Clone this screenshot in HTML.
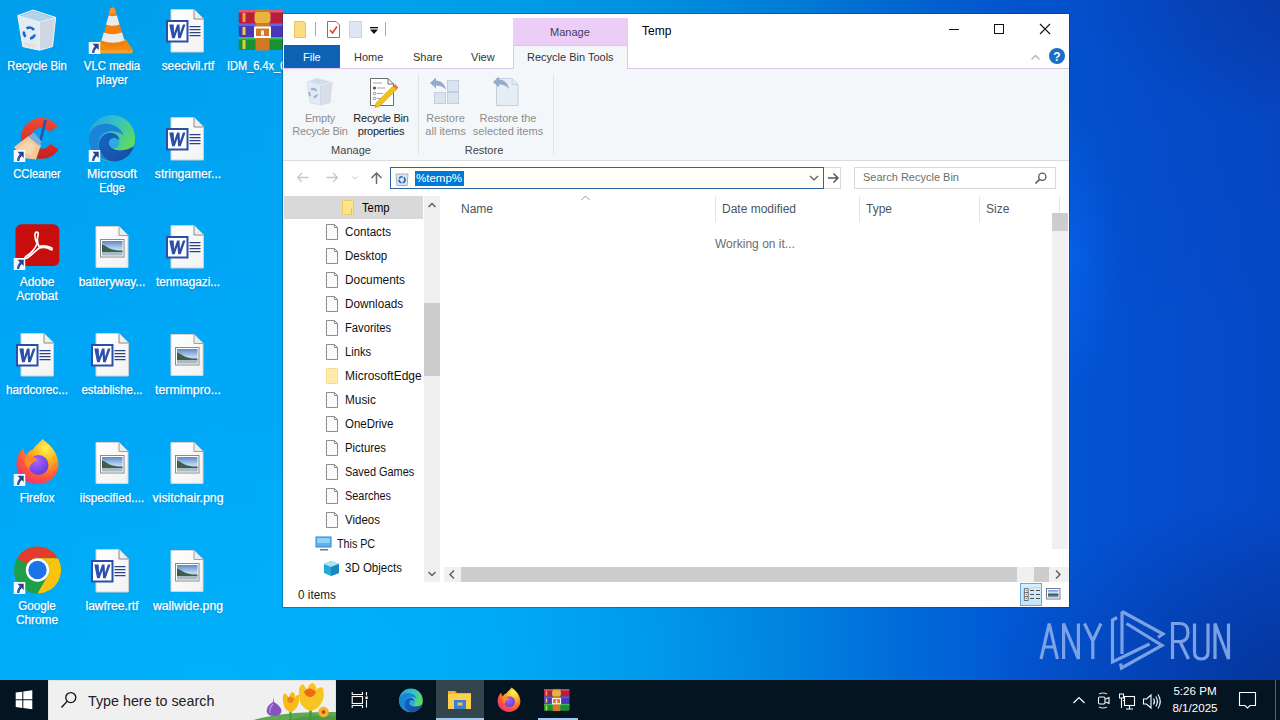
<!DOCTYPE html>
<html><head><meta charset="utf-8">
<style>
*{margin:0;padding:0;box-sizing:border-box}
html,body{width:1280px;height:720px;overflow:hidden}
body{font-family:"Liberation Sans",sans-serif;position:relative;background:#0a7fe0}
.abs{position:absolute;white-space:nowrap}
#bg{position:absolute;left:0;top:0;width:1280px;height:680px;background:radial-gradient(ellipse 50px 140px at 1069px 255px,rgba(10,110,255,.45),rgba(10,110,255,0)),radial-gradient(ellipse 300px 180px at 1280px 680px,rgba(0,10,60,.3),rgba(0,10,60,0)),radial-gradient(ellipse 200px 120px at 1280px 0px,rgba(20,0,60,.15),rgba(20,0,60,0)),linear-gradient(90deg,#00a6f6 0%,#00aaf8 28%,#00a4f2 40%,#0098ea 50%,#0082e0 62%,#006ad8 71%,#0358d6 79%,#044fd0 89%,#0648c6 100%)}
#bg2{position:absolute;left:0;top:0;width:1280px;height:680px;background:radial-gradient(ellipse 600px 260px at 200px 680px,rgba(0,200,255,.28),rgba(0,200,255,0)),linear-gradient(180deg,rgba(0,0,40,0.05) 0%,rgba(0,0,0,0) 50%)}
.lab{position:absolute;width:100px;text-align:center;color:#fff;font-size:12px;line-height:15px;white-space:nowrap;text-shadow:0 1px 2px rgba(0,20,60,.3);-webkit-text-stroke:0.25px #fff}
#win{position:absolute;left:283px;top:14px;width:786px;height:593px;background:#fff;overflow:hidden}
.t11{font-size:11px}
.t12{font-size:12px}
#taskbar{position:absolute;left:0;top:680px;width:1280px;height:40px;background:#041420}
</style></head>
<body>
<div id="bg"></div><div id="bg2"></div>

<svg width="0" height="0" style="position:absolute">
<defs>
 <linearGradient id="gSky" x1="0" y1="0" x2="0" y2="1"><stop offset="0" stop-color="#5d86cc"/><stop offset=".5" stop-color="#b6d2ee"/><stop offset="1" stop-color="#dfe8ee"/></linearGradient>
 <linearGradient id="gPage" x1="0" y1="0" x2="1" y2="1"><stop offset="0" stop-color="#ffffff"/><stop offset="1" stop-color="#f2f2f2"/></linearGradient>
 <symbol id="sc" viewBox="0 0 12 12">
  <rect x="0" y="0" width="12" height="12" fill="#f4fbff"/>
  <path d="M4 1.8 H10.2 V8 L8.2 6 C6.6 7.6 5.8 9.2 5.8 11 H3.6 C3.5 8.4 4.5 6.2 6.3 4.2 Z" fill="#2a4088"/>
  <path d="M4.6 10.6 C4.4 8.6 5.2 6.6 6.8 5" fill="none" stroke="#4a7ac8" stroke-width=".7"/>
 </symbol>
 <symbol id="word" viewBox="0 0 48 48">
  <path d="M7.5 3.5 H30.5 L40 13 V46 H7.5 Z" fill="url(#gPage)" stroke="#cfcfcf" stroke-width="1"/>
  <path d="M30.5 3.5 V13 H40" fill="#eeeeee" stroke="#8a8a8a" stroke-width="1"/>
  <rect x="3.5" y="15" width="20.5" height="20.5" fill="#fff" stroke="#2b4fa8" stroke-width="2"/>
  <path d="M5.8 18.5 H10.2 L10.6 27 L13.6 18.5 H16 L16.5 27 L19.4 18.5 H22 L17.2 32.2 H14.6 L14 24.2 L11.2 32.2 H8.6 Z" fill="#2b4fa8"/>
  <g stroke="#2c4488" stroke-width="1.1"><path d="M26 20.6 H37 M26 23.6 H37 M26 26.6 H37 M26 29.6 H37"/></g>
 </symbol>
 <symbol id="img" viewBox="0 0 48 48">
  <path d="M7.5 4.5 H30.5 L39.5 13.5 V45.5 H7.5 Z" fill="url(#gPage)" stroke="#d4d4d4" stroke-width="1"/>
  <path d="M30.5 4.5 V13.5 H39.5" fill="#ececec" stroke="#a0a0a0" stroke-width="1"/>
  <rect x="12" y="17.5" width="23.5" height="17.5" fill="#fff" stroke="#8a8a8a" stroke-width="1"/>
  <rect x="13.5" y="19" width="20.5" height="14.5" fill="url(#gSky)"/>
  <path d="M13.5 22.5 C17 23.5 20 26.5 24 27.5 C27 28.5 31 28.5 34 28.5 V30.5 H13.5Z" fill="#3e5e48"/>
  <path d="M13.5 30 H34 V33.5 H13.5Z" fill="#a8bac4"/>
 </symbol>
 <symbol id="recycle" viewBox="0 0 48 48">
  <path d="M4.3 9.6 L26 15.7 L26 44.2 L9.3 40.6Z" fill="#e4ecf3"/>
  <path d="M26 15.7 L42.2 11.4 L39 40.6 L26 44.2Z" fill="#cfd8e2"/>
  <path d="M4.3 9.6 L19.5 4.1 L42.2 11.4 L26 15.7Z" fill="#9cc4e6"/>
  <path d="M7.5 9.8 L19.5 5.8 L38.5 11.6 L26 14.6Z" fill="#b4d2ec"/>
  <path d="M4.3 9.6 L19.5 4.1 L42.2 11.4 L26 15.7Z M4.3 9.6 L9.3 40.6 L26 44.2 L39 40.6 L42.2 11.4" fill="none" stroke="#eef5fb" stroke-width="1"/>
  <path d="M26 15.7 V44.2" stroke="#f4f8fb" stroke-width=".8"/>
  <g fill="none" stroke="#1f66cc" stroke-width="2.6">
   <path d="M13 22.5 A5.6 5.6 0 0 1 20.5 24"/>
   <path d="M21.3 28.5 A5.6 5.6 0 0 1 16.5 32.5"/>
   <path d="M12.2 30.8 A5.6 5.6 0 0 1 10.5 25.5"/>
  </g>
  <path d="M10 36 L22 38 L22 42 L11 39.5Z" fill="#f2d6c0" opacity=".6"/>
 </symbol>
 <symbol id="vlc" viewBox="0 0 48 48">
  <path d="M13 33 L37 33 L44.5 44 L43.5 47 L9 47 L8 44Z" fill="#f28a10"/>
  <path d="M9 44 L44 44 L43.5 47.5 L9 47.5Z" fill="#f7a030"/>
  <path d="M22 2 Q24 .8 26 2 L37 38 Q24 43 13 38Z" fill="#f47e0c"/>
  <path d="M20.2 9.5 Q24 11 28.3 9.5 L31 18.5 Q24 21 17.5 18.5Z" fill="#e9ecee"/>
  <path d="M15.2 26.5 Q24 30 33.5 26.5 L36 34.5 Q24 39 13 34.5Z" fill="#e9ecee"/>
  <path d="M22 2 Q24 .8 26 2 L27.5 7 Q24 8.5 20.5 7Z" fill="#f7943a"/>
 </symbol>
 <symbol id="winrar" viewBox="0 0 48 48">
  <rect x="0" y="4" width="48" height="13.5" rx="2" fill="#b81e3a"/>
  <rect x="0" y="4" width="48" height="2.5" rx="1.2" fill="#e0587a"/>
  <rect x="0" y="17.5" width="48" height="13.5" rx="2" fill="#4838b8"/>
  <rect x="0" y="17.5" width="48" height="2.5" fill="#6e62d8"/>
  <rect x="0" y="31" width="48" height="13" rx="2" fill="#1a9034"/>
  <rect x="0" y="31" width="48" height="2.5" fill="#40b860"/>
  <rect x="4" y="7" width="3" height="9" fill="#e8a040"/>
  <rect x="4" y="21" width="3" height="8" fill="#e8d040"/>
  <rect x="4" y="34" width="3" height="9" fill="#d8d038"/>
  <rect x="17" y="3.5" width="14" height="41" fill="#d07a26"/>
  <rect x="16" y="6" width="16" height="11" rx="3" fill="#e8b440"/>
  <rect x="16.5" y="21.5" width="15" height="9.5" fill="none" stroke="#fff" stroke-width="2"/>
  <rect x="22.5" y="24.5" width="3" height="5" fill="#f0f0f0"/>
 </symbol>
 <symbol id="ccleaner" viewBox="0 0 48 48">
  <defs><linearGradient id="ccg" x1="0" y1="0" x2="0" y2="1"><stop offset="0" stop-color="#f04a38"/><stop offset="1" stop-color="#c81e1e"/></linearGradient></defs>
  <path d="M44.4 12.3 A20.5 20.5 0 1 0 45.2 35.2 L36.7 29.9 A10.5 10.5 0 1 1 36.3 18.1Z" fill="url(#ccg)"/>
  <path d="M30.8 5.5 L33.3 6.5 L27.5 30 L25 29Z" fill="#2456a8"/>
  <path d="M0.5 33 L15 22 L27.5 31 L22.5 45.5 L9 44Z" fill="#f2c898"/>
  <path d="M4 35 L15 26 L22 32 L18 42Z" fill="#f8dcb8" opacity=".7"/>
  <path d="M14.5 22.5 L20.5 18.5 L28.5 28 L25.5 31.5Z" fill="#7aaee0"/>
 </symbol>
 <symbol id="edge" viewBox="0 0 48 48">
  <defs>
   <linearGradient id="eg1" x1="0" y1="0" x2="1" y2=".7"><stop offset="0" stop-color="#2a9ee2"/><stop offset=".45" stop-color="#34c0c8"/><stop offset="1" stop-color="#66e04a"/></linearGradient>
   <linearGradient id="eg2" x1="0" y1="0" x2="1" y2="1"><stop offset="0" stop-color="#1466c8"/><stop offset="1" stop-color="#1a4a9c"/></linearGradient>
  </defs>
  <circle cx="23.3" cy="24.3" r="23.3" fill="url(#eg1)"/>
  <path d="M0.2 24 C1 14 10 9 20 10 C27 11 33 15 35 21 C30 17 22 16 16 19 C9 23 8 33 13 40 C17 45 23 47.5 28 47.4 C12 48 0 38 0.2 24Z" fill="#1a84d8"/>
  <path d="M13 40 C8 33 10 23 17 20 C23 17 30 20 31 26 C29 25 26 24 24 25.5 C20 28 21 33 25 35 C31 38 40 36 45.5 32 C43 41 35 47 26 47.5 C20 47.5 16 44 13 40Z" fill="url(#eg2)"/>
  <circle cx="25.5" cy="29" r="5.2" fill="#2fa8e6"/>
 </symbol>
 <symbol id="acrobat" viewBox="0 0 48 48">
  <rect x="2" y="2.3" width="43.8" height="41.7" rx="6" fill="#c80d0d"/>
  <path d="M23.3 10.2 C20.6 10.2 20.8 16 23.6 21.8 C21.6 26.8 17 31.8 12.2 34.6 C10.8 35.6 11.8 37 13.6 36 C18 33.2 22 29.2 25.6 26 C30 25 34 25.2 37.2 27.6 C38.8 28.8 39.2 26.2 37.4 25.6 C33.2 23.6 28.4 23.8 25.4 24.4 C23.8 21 23.4 17 24.6 12.6 C25 11 24.4 10.2 23.3 10.2Z" fill="none" stroke="#fff" stroke-width="1.7" stroke-linejoin="round"/>
 </symbol>
 <symbol id="firefox" viewBox="0 0 48 48">
  <defs>
   <radialGradient id="ff1" cx=".7" cy=".2" r=".9"><stop offset="0" stop-color="#fff44f"/><stop offset=".35" stop-color="#ffb020"/><stop offset=".7" stop-color="#ff5a36"/><stop offset="1" stop-color="#f02c7a"/></radialGradient>
   <radialGradient id="ff2" cx=".4" cy=".3" r=".8"><stop offset="0" stop-color="#b060ff"/><stop offset="1" stop-color="#5a3ad8"/></radialGradient>
  </defs>
  <path d="M29 1 C34 5 44 12 45 26 C45 38 36 46 24 46 C12 46 3 38 3 26 C3 19 6 13 10 10 C10 14 11 16 13 17 C14 14 17 12 19 12 C21 8 26 5 29 1Z" fill="url(#ff1)"/>
  <circle cx="25" cy="27" r="10" fill="url(#ff2)"/>
  <path d="M12 20 C16 17 24 20 24 22 C20 24 16 26 16 31 C12 28 11 24 12 20Z" fill="#ff8a2a"/>
 </symbol>
 <symbol id="chrome" viewBox="0 0 48 48">
  <circle cx="24" cy="24" r="23.5" fill="#1fa048"/>
  <path d="M24 .5 A23.5 23.5 0 0 1 44.4 12.3 L24 12.3 A11.7 11.7 0 0 0 13.9 18.2 L3.7 12.3 A23.5 23.5 0 0 1 24 .5Z" fill="#e33b2e"/>
  <path d="M44.4 12.3 A23.5 23.5 0 0 1 24 47.5 L34.1 29.9 A11.7 11.7 0 0 0 34.1 18.2 Z" fill="#fcc30c"/>
  <path d="M44.4 12.3 L24 12.3 A11.7 11.7 0 0 1 34.1 18.2Z" fill="#fcc30c"/>
  <circle cx="24" cy="24" r="11.7" fill="#fff"/>
  <circle cx="24" cy="24" r="9.2" fill="#1a73e8"/>
 </symbol>
</defs>
</svg>

<svg class="abs" style="left:0;top:0" width="283" height="680">
<use href="#recycle" x="13.5" y="6" width="48" height="48"/>
<use href="#vlc" x="88.5" y="6" width="48" height="48"/>
<use href="#sc" x="88.5" y="42" width="12" height="12"/>
<use href="#word" x="163.5" y="6" width="48" height="48"/>
<use href="#winrar" x="238.5" y="6" width="48" height="48"/>
<use href="#ccleaner" x="13.5" y="114" width="48" height="48"/>
<use href="#sc" x="13.5" y="150" width="12" height="12"/>
<use href="#edge" x="88.5" y="114" width="48" height="48"/>
<use href="#sc" x="88.5" y="150" width="12" height="12"/>
<use href="#word" x="163.5" y="114" width="48" height="48"/>
<use href="#acrobat" x="13.5" y="222" width="48" height="48"/>
<use href="#sc" x="13.5" y="258" width="12" height="12"/>
<use href="#img" x="88.5" y="222" width="48" height="48"/>
<use href="#word" x="163.5" y="222" width="48" height="48"/>
<use href="#word" x="13.5" y="330" width="48" height="48"/>
<use href="#word" x="88.5" y="330" width="48" height="48"/>
<use href="#img" x="163.5" y="330" width="48" height="48"/>
<use href="#firefox" x="13.5" y="438" width="48" height="48"/>
<use href="#sc" x="13.5" y="474" width="12" height="12"/>
<use href="#img" x="88.5" y="438" width="48" height="48"/>
<use href="#img" x="163.5" y="438" width="48" height="48"/>
<use href="#chrome" x="13.5" y="546" width="48" height="48"/>
<use href="#sc" x="13.5" y="582" width="12" height="12"/>
<use href="#word" x="88.5" y="546" width="48" height="48"/>
<use href="#img" x="163.5" y="546" width="48" height="48"/>
</svg>
<div class="lab" style="left:-13px;width:100px;top:58.5px;transform:scaleX(0.939)">Recycle Bin</div>
<div class="lab" style="left:61.8px;width:100px;top:58.5px;transform:scaleX(0.948)">VLC media</div>
<div class="lab" style="left:61.8px;width:100px;top:73.1px;transform:scaleX(0.976)">player</div>
<div class="lab" style="left:137.5px;width:100px;top:58.5px;transform:scaleX(0.986)">seecivil.rtf</div>
<div class="lab" style="left:227.4px;top:58.5px;width:auto;text-align:left;transform:scaleX(0.915);transform-origin:0 0">IDM_6.4x_C</div>
<div class="lab" style="left:-13px;width:100px;top:166.5px;transform:scaleX(0.937)">CCleaner</div>
<div class="lab" style="left:61.8px;width:100px;top:166.5px;transform:scaleX(1.025)">Microsoft</div>
<div class="lab" style="left:61.8px;width:100px;top:181.1px;transform:scaleX(0.917)">Edge</div>
<div class="lab" style="left:137.5px;width:100px;top:166.5px;transform:scaleX(1.004)">stringamer...</div>
<div class="lab" style="left:-13px;width:100px;top:274.5px;transform:scaleX(1.000)">Adobe</div>
<div class="lab" style="left:-13px;width:100px;top:289.1px;transform:scaleX(1.009)">Acrobat</div>
<div class="lab" style="left:61.8px;width:100px;top:274.5px;transform:scaleX(0.992)">batteryway...</div>
<div class="lab" style="left:137.5px;width:100px;top:274.5px;transform:scaleX(0.982)">tenmagazi...</div>
<div class="lab" style="left:-13px;width:100px;top:382.5px;transform:scaleX(0.977)">hardcorec...</div>
<div class="lab" style="left:61.8px;width:100px;top:382.5px;transform:scaleX(0.953)">establishe...</div>
<div class="lab" style="left:137.5px;width:100px;top:382.5px;transform:scaleX(1.031)">termimpro...</div>
<div class="lab" style="left:-13px;width:100px;top:490.5px;transform:scaleX(0.946)">Firefox</div>
<div class="lab" style="left:61.8px;width:100px;top:490.5px;transform:scaleX(0.976)">iispecified....</div>
<div class="lab" style="left:137.5px;width:100px;top:490.5px;transform:scaleX(1.023)">visitchair.png</div>
<div class="lab" style="left:-13px;width:100px;top:598.5px;transform:scaleX(0.969)">Google</div>
<div class="lab" style="left:-13px;width:100px;top:613.1px;transform:scaleX(0.989)">Chrome</div>
<div class="lab" style="left:61.8px;width:100px;top:598.5px;transform:scaleX(1.008)">lawfree.rtf</div>
<div class="lab" style="left:137.5px;width:100px;top:598.5px;transform:scaleX(1.019)">wallwide.png</div>
<!-- Explorer window -->
<div class="abs" style="left:282px;top:13px;width:788px;height:595px;border:1px solid rgba(10,40,100,.35)"></div>
<div id="win">
  <svg width="0" height="0" style="position:absolute"><defs>
   <symbol id="pg" viewBox="0 0 12 16"><path d="M.5 .5 H8.5 L11.5 3.5 V15.5 H.5Z" fill="#fbfbfb" stroke="#8c8c8c" stroke-width="1"/><path d="M8.5 .5 V3.5 H11.5" fill="none" stroke="#8c8c8c" stroke-width="1"/></symbol>
  </defs></svg>
  <!-- title bar -->
  <svg class="abs" style="left:0;top:0" width="120" height="31">
   <path d="M11.5 7.5 H21 L22.5 9 V23.5 H11.5Z" fill="#fcdc7c" stroke="#e6c260" stroke-width="1"/>
   <rect x="32" y="8" width="1" height="14" fill="#a8a8a8"/>
   <path d="M44.5 7.5 H53 L56.5 11 V23.5 H44.5Z" fill="#fff" stroke="#777" stroke-width="1"/>
   <path d="M47 16 L49.5 19 L54 12.5" fill="none" stroke="#e0442a" stroke-width="1.6"/>
   <path d="M66.5 7.5 H78.5 V23.5 H66.5Z" fill="#dde6f2" stroke="#c8d2e0" stroke-width="1"/>
   <rect x="87" y="13" width="8" height="1.3" fill="#111"/>
   <path d="M87 15.5 H95 L91 20Z" fill="#111"/>
   <rect x="102" y="8" width="1" height="14" fill="#a8a8a8"/>
  </svg>
  <div class="abs" style="left:230px;top:4px;width:115px;height:27px;background:#ebcdf7"></div>
  <div class="abs t11" style="left:267px;top:12px;color:#463a5c">Manage</div>
  <div class="abs t12" style="left:359px;top:10px;color:#000">Temp</div>
  <svg class="abs" style="left:660px;top:4px" width="120" height="24">
   <rect x="6" y="11" width="10" height="1" fill="#111"/>
   <rect x="51.5" y="6.5" width="9" height="9" fill="none" stroke="#111" stroke-width="1"/>
   <path d="M97 6 L107 16 M107 6 L97 16" stroke="#111" stroke-width="1.1"/>
  </svg>
  <!-- ribbon tabs -->
  <div class="abs" style="left:1px;top:31px;width:56px;height:23px;background:#0e62b4"></div>
  <div class="abs t11" style="left:20px;top:37px;color:#fff">File</div>
  <div class="abs t11" style="left:71px;top:37px;color:#333">Home</div>
  <div class="abs t11" style="left:130px;top:37px;color:#333">Share</div>
  <div class="abs t11" style="left:188px;top:37px;color:#333">View</div>
  <div class="abs" style="left:0;top:54px;width:786px;height:1px;background:#dcc7ea"></div>
  <div class="abs" style="left:230px;top:31px;width:115px;height:24px;background:#f4f7fa;border:1px solid #dcc7ea;border-bottom:none"></div>
  <div class="abs t11" style="left:244px;top:37px;color:#333">Recycle Bin Tools</div>
  <svg class="abs" style="left:740px;top:32px" width="46" height="22">
   <path d="M8.5 13.5 L12.5 9.5 L16.5 13.5" fill="none" stroke="#b4b4b4" stroke-width="1.3"/>
   <circle cx="34" cy="10" r="8" fill="#1a6ec6"/>
   <text x="34" y="14.5" text-anchor="middle" font-family="Liberation Sans" font-weight="bold" font-size="12" fill="#fff">?</text>
  </svg>
  <!-- ribbon body -->
  <div class="abs" style="left:0;top:55px;width:786px;height:92px;background:#f4f7fa;border-bottom:1px solid #dadbdc"></div>
  <div class="abs" style="left:135px;top:60px;width:1px;height:80px;background:#e2e3e4"></div>
  <div class="abs" style="left:270px;top:60px;width:1px;height:80px;background:#e2e3e4"></div>
  <svg class="abs" style="left:0;top:55px" width="300" height="60">
   <!-- empty recycle bin -->
   <g opacity=".6">
    <path d="M23.8 12.5 L37.5 16.5 L37.5 36 L27 33.8Z" fill="#dbe3ec" stroke="#b0c0d0" stroke-width=".6"/>
    <path d="M37.5 16.5 L49.2 12.8 L47 33.8 L37.5 36Z" fill="#c4cfdb" stroke="#b0c0d0" stroke-width=".6"/>
    <path d="M23.8 12.5 L34 8.8 L49.2 12.8 L37.5 16.5Z" fill="#b6cde2" stroke="#e8f0f6" stroke-width=".8"/>
    <g fill="none" stroke="#5a86b8" stroke-width="2"><path d="M28 20.5 A4.2 4.2 0 0 1 33.5 22"/><path d="M34 25.5 A4.2 4.2 0 0 1 30.5 28.5"/><path d="M27.3 27 A4.2 4.2 0 0 1 26.5 23"/></g>
   </g>
   <!-- properties -->
   <path d="M87.5 9.5 H105 L110.5 15 V36.5 H87.5Z" fill="#fff" stroke="#6b6b6b" stroke-width="1"/>
   <path d="M105 9.5 V15 H110.5" fill="none" stroke="#6b6b6b" stroke-width="1"/>
   <circle cx="91.5" cy="19" r="1.6" fill="#555"/><circle cx="91.5" cy="24.5" r="1.3" fill="none" stroke="#5a7eb0" stroke-width=".8"/><circle cx="91.5" cy="29.5" r="1.3" fill="none" stroke="#5a7eb0" stroke-width=".8"/>
   <path d="M94 19 H102 M90 14 H99 M94 24.5 H100 M94 29.5 H99" stroke="#8a8a8a" stroke-width=".8"/>
   <path d="M93 34 L110 17 L113.5 20.5 L96.5 37.5 L92 38.5Z" fill="#f2c21c" stroke="#c89a10" stroke-width=".6"/>
   <path d="M110 17 L112 15 L115.5 18.5 L113.5 20.5Z" fill="#e8744a"/>
   <!-- restore all -->
   <g opacity=".55">
    <rect x="164.5" y="11.5" width="11" height="11" fill="#c8d6e6" stroke="#9cb0c8"/>
    <rect x="151.5" y="23.5" width="11" height="11" fill="#c8d6e6" stroke="#9cb0c8"/>
    <rect x="164.5" y="23.5" width="11" height="11" fill="#c8d6e6" stroke="#9cb0c8"/>
    <path d="M147 14 L153 8.5 L153 11.5 C158 11.5 162 15 163 21 C160 17.5 157 16.5 153 16.5 L153 19.5Z" fill="#4a6ea8"/>
   </g>
   <!-- restore selected -->
   <g opacity=".55">
    <path d="M213.5 9.5 H229 L235 15.5 V36.5 H213.5Z" fill="#dbe6f2" stroke="#9cb0c8"/>
    <path d="M229 9.5 V15.5 H235" fill="none" stroke="#9cb0c8"/>
    <path d="M210 13 L216 7.5 L216 10.5 C221 10.5 225 14 226 20 C223 16.5 220 15.5 216 15.5 L216 18.5Z" fill="#4a6ea8"/>
   </g>
  </svg>
  <div class="abs t11" style="left:7px;top:98px;color:#8d8d8d;width:60px;text-align:center;line-height:12.5px;letter-spacing:-.25px">Empty<br>Recycle Bin</div>
  <div class="abs t11" style="left:67px;top:98px;color:#222;width:62px;text-align:center;line-height:12.5px;letter-spacing:-.25px">Recycle Bin<br>properties</div>
  <div class="abs t11" style="left:132px;top:98px;color:#8d8d8d;width:61px;text-align:center;line-height:12.5px">Restore<br>all items</div>
  <div class="abs t11" style="left:185px;top:98px;color:#8d8d8d;width:80px;text-align:center;line-height:12.5px">Restore the<br>selected items</div>
  <div class="abs t11" style="left:38px;top:130px;color:#444;width:60px;text-align:center">Manage</div>
  <div class="abs t11" style="left:171px;top:130px;color:#444;width:60px;text-align:center">Restore</div>
  <!-- address row -->
  <svg class="abs" style="left:0;top:150px" width="110" height="28">
   <path d="M14.5 13.5 H25.5 M14.5 13.5 L19 9 M14.5 13.5 L19 18" fill="none" stroke="#c6c6c6" stroke-width="1.3"/>
   <path d="M43.5 13.5 H54.5 M54.5 13.5 L50 9 M54.5 13.5 L50 18" fill="none" stroke="#c6c6c6" stroke-width="1.3"/>
   <path d="M69.5 12.5 L72 15 L74.5 12.5" fill="none" stroke="#c6c6c6" stroke-width="1"/>
   <path d="M93.5 20 V9 M88.5 14 L93.5 9 L98.5 14" fill="none" stroke="#6b6b6b" stroke-width="1.5"/>
  </svg>
  <div class="abs" style="left:107px;top:153px;width:434px;height:22px;border:1px solid #2a63a8;background:#fffff8"></div>
  <svg class="abs" style="left:112px;top:158px" width="14" height="14">
   <path d="M1 2 H13 L12 13.5 H2Z" fill="#dfe8f0" stroke="#8aa0b8" stroke-width=".8"/>
   <circle cx="7" cy="7.8" r="3" fill="none" stroke="#1e63c4" stroke-width="1.6" stroke-dasharray="4 1.2"/>
  </svg>
  <div class="abs" style="left:132px;top:157px;width:49px;height:15px;background:#0078d7"></div>
  <div class="abs" style="left:133px;top:158px;color:#fff;font-size:11.5px">%temp%</div>
  <svg class="abs" style="left:525px;top:158px" width="12" height="12"><path d="M2 4 L6 8 L10 4" fill="none" stroke="#555" stroke-width="1.1"/></svg>
  <div class="abs" style="left:541px;top:153px;width:17px;height:22px;border:1px solid #d9d9d9;border-left:none"></div>
  <svg class="abs" style="left:544px;top:158px" width="12" height="12"><path d="M1 6 H11 M6.5 1.5 L11 6 L6.5 10.5" fill="none" stroke="#555" stroke-width="1.5"/></svg>
  <div class="abs" style="left:571px;top:153px;width:202px;height:22px;border:1px solid #d9d9d9"></div>
  <div class="abs t11" style="left:580px;top:157px;color:#6d6d6d">Search Recycle Bin</div>
  <svg class="abs" style="left:751px;top:157px" width="14" height="14"><circle cx="8.3" cy="5.7" r="3.6" fill="none" stroke="#555" stroke-width="1.3"/><path d="M5.6 8.4 L1.5 12.5" stroke="#555" stroke-width="1.6"/></svg>
  <!-- nav pane -->
  <div class="abs" style="left:1px;top:182px;width:139px;height:23px;background:#d9d9d9"></div>
  <svg class="abs" style="left:58px;top:185px" width="14" height="17"><path d="M1.5 1.5 H12.5 V15.5 H1.5Z" fill="#fde48c" stroke="#eccb64" stroke-width="1"/><path d="M10.5 9 V15.5" stroke="#e6c05a" stroke-width="1"/></svg>
  <div class="abs" style="left:79px;top:187px;font-size:12px;color:#000;transform:scaleX(0.937);transform-origin:0 0">Temp</div>
  <svg class="abs" style="left:43px;top:210px" width="12" height="16"><use href="#pg" width="12" height="16"/></svg>
  <div class="abs" style="left:62px;top:211px;font-size:12px;color:#111;transform:scaleX(0.972);transform-origin:0 0">Contacts</div>
  <svg class="abs" style="left:43px;top:234px" width="12" height="16"><use href="#pg" width="12" height="16"/></svg>
  <div class="abs" style="left:62px;top:235px;font-size:12px;color:#111;transform:scaleX(0.959);transform-origin:0 0">Desktop</div>
  <svg class="abs" style="left:43px;top:258px" width="12" height="16"><use href="#pg" width="12" height="16"/></svg>
  <div class="abs" style="left:62px;top:259px;font-size:12px;color:#111;transform:scaleX(0.989);transform-origin:0 0">Documents</div>
  <svg class="abs" style="left:43px;top:282px" width="12" height="16"><use href="#pg" width="12" height="16"/></svg>
  <div class="abs" style="left:62px;top:283px;font-size:12px;color:#111;transform:scaleX(0.979);transform-origin:0 0">Downloads</div>
  <svg class="abs" style="left:43px;top:306px" width="12" height="16"><use href="#pg" width="12" height="16"/></svg>
  <div class="abs" style="left:62px;top:307px;font-size:12px;color:#111;transform:scaleX(0.936);transform-origin:0 0">Favorites</div>
  <svg class="abs" style="left:43px;top:330px" width="12" height="16"><use href="#pg" width="12" height="16"/></svg>
  <div class="abs" style="left:62px;top:331px;font-size:12px;color:#111;transform:scaleX(0.935);transform-origin:0 0">Links</div>
  <svg class="abs" style="left:43px;top:354px" width="13" height="16"><path d="M.5 .5 H11.5 V15.5 H.5Z" fill="#fdeaa8" stroke="#f4dc90"/></svg>
  <div class="abs" style="left:62px;top:355px;font-size:12px;color:#111;transform:scaleX(1.0);transform-origin:0 0">MicrosoftEdge</div>
  <svg class="abs" style="left:43px;top:378px" width="12" height="16"><use href="#pg" width="12" height="16"/></svg>
  <div class="abs" style="left:62px;top:379px;font-size:12px;color:#111;transform:scaleX(0.983);transform-origin:0 0">Music</div>
  <svg class="abs" style="left:43px;top:402px" width="12" height="16"><use href="#pg" width="12" height="16"/></svg>
  <div class="abs" style="left:62px;top:403px;font-size:12px;color:#111;transform:scaleX(0.955);transform-origin:0 0">OneDrive</div>
  <svg class="abs" style="left:43px;top:426px" width="12" height="16"><use href="#pg" width="12" height="16"/></svg>
  <div class="abs" style="left:62px;top:427px;font-size:12px;color:#111;transform:scaleX(0.946);transform-origin:0 0">Pictures</div>
  <svg class="abs" style="left:43px;top:450px" width="12" height="16"><use href="#pg" width="12" height="16"/></svg>
  <div class="abs" style="left:62px;top:451px;font-size:12px;color:#111;transform:scaleX(0.91);transform-origin:0 0">Saved Games</div>
  <svg class="abs" style="left:43px;top:474px" width="12" height="16"><use href="#pg" width="12" height="16"/></svg>
  <div class="abs" style="left:62px;top:475px;font-size:12px;color:#111;transform:scaleX(0.908);transform-origin:0 0">Searches</div>
  <svg class="abs" style="left:43px;top:498px" width="12" height="16"><use href="#pg" width="12" height="16"/></svg>
  <div class="abs" style="left:62px;top:499px;font-size:12px;color:#111;transform:scaleX(0.96);transform-origin:0 0">Videos</div>
  <svg class="abs" style="left:32px;top:522px" width="18" height="16"><rect x="1" y="1" width="15" height="10" fill="#5ab4ec" stroke="#2c8ad0"/><rect x="2" y="2" width="13" height="5" fill="#8fd0f8"/><rect x="5" y="13" width="8" height="1.5" fill="#777"/></svg>
  <div class="abs" style="left:54px;top:523px;font-size:12px;color:#111;transform:scaleX(0.893);transform-origin:0 0">This PC</div>
  <svg class="abs" style="left:40px;top:546px" width="18" height="17"><path d="M8 1 L16 4 V13 L8 16 L1 13 V4Z" fill="#24a8d8"/><path d="M1 4 L8 7 L16 4 L8 1Z" fill="#a8e4f4"/><path d="M8 7 V16 L16 13 V4Z" fill="#1a88c0"/></svg>
  <div class="abs" style="left:62px;top:547px;font-size:12px;color:#111;transform:scaleX(0.959);transform-origin:0 0">3D Objects</div>
  <div class="abs" style="left:141px;top:182px;width:16px;height:386px;background:#f0f0f0"></div>
  <div class="abs" style="left:141px;top:289px;width:16px;height:73px;background:#cdcdcd"></div>
  <svg class="abs" style="left:141px;top:182px" width="16" height="386">
   <path d="M4.5 11 L8 7.5 L11.5 11" fill="none" stroke="#606060" stroke-width="1.5"/>
   <path d="M4.5 376 L8 379.5 L11.5 376" fill="none" stroke="#606060" stroke-width="1.5"/>
  </svg>
  <!-- content -->
  <svg class="abs" style="left:160px;top:180px" width="640" height="50">
   <path d="M138.5 6 L142.5 2 L146.5 6" fill="none" stroke="#9a9a9a" stroke-width="1"/>
   <rect x="272" y="2" width="1" height="26" fill="#e5e5e5"/>
   <rect x="416" y="2" width="1" height="26" fill="#e5e5e5"/>
   <rect x="536" y="2" width="1" height="26" fill="#e5e5e5"/>
   <rect x="616" y="2" width="1" height="18" fill="#e5e5e5"/>
  </svg>
  <div class="abs t12" style="left:178px;top:188px;color:#4a5666">Name</div>
  <div class="abs t12" style="left:439px;top:188px;color:#4a5666">Date modified</div>
  <div class="abs t12" style="left:583px;top:188px;color:#4a5666">Type</div>
  <div class="abs t12" style="left:703px;top:188px;color:#4a5666">Size</div>
  <div class="abs t12" style="left:432px;top:223px;color:#6d6d6d">Working on it...</div>
  <!-- vertical scrollbar -->
  <div class="abs" style="left:769px;top:199px;width:16px;height:336px;background:#f0f0f0"></div>
  <div class="abs" style="left:769px;top:199px;width:16px;height:18px;background:#cdcdcd"></div>
  <!-- horizontal scrollbar -->
  <div class="abs" style="left:161px;top:553px;width:625px;height:15px;background:#f0f0f0"></div>
  <div class="abs" style="left:178px;top:553px;width:556px;height:15px;background:#cdcdcd"></div>
  <div class="abs" style="left:751px;top:553px;width:15px;height:15px;background:#cdcdcd"></div>
  <svg class="abs" style="left:161px;top:553px" width="625" height="15">
   <path d="M10 3.5 L6 7.5 L10 11.5" fill="none" stroke="#606060" stroke-width="1.5"/>
   <path d="M773 3.5 L777 7.5 L773 11.5" fill="none" stroke="#606060" stroke-width="1.5" transform="translate(-161 0)"/>
  </svg>
  <!-- status bar -->
  <div class="abs" style="left:15px;top:574px;font-size:12px;color:#222;transform:scaleX(0.977);transform-origin:0 0">0 items</div>
  <div class="abs" style="left:737px;top:569px;width:22px;height:23px;background:linear-gradient(180deg,#d6eefc,#c4e4fa);border:1px solid #6aa8dc"></div>
  <svg class="abs" style="left:737px;top:569px" width="49" height="23">
   <g fill="#fff" stroke="#606060" stroke-width=".9"><rect x="4.3" y="5.7" width="3.8" height="3.8"/><rect x="4.3" y="9.7" width="3.8" height="3.8"/><rect x="4.3" y="13.7" width="3.8" height="3.8"/></g>
   <g fill="#333"><rect x="5.7" y="7.1" width="1" height="1"/><rect x="5.7" y="11.1" width="1" height="1"/><rect x="5.7" y="15.1" width="1" height="1"/></g>
   <path d="M10 7.5 H14 M16 7.5 H20 M10 11.5 H14 M16 11.5 H20 M10 15.5 H14 M16 15.5 H20" stroke="#505050" stroke-width="1.1"/>
   <rect x="9.5" y="4" width="11" height="1" fill="#b8d8ee"/>
   <rect x="26.5" y="5.5" width="13.5" height="10.5" fill="#fff" stroke="#7a7a8a"/>
   <defs><linearGradient id="lgv" x1="0" y1="0" x2="0" y2="1"><stop offset="0" stop-color="#6a8ee0"/><stop offset=".35" stop-color="#d0e4f4"/><stop offset=".6" stop-color="#3a5a68"/><stop offset="1" stop-color="#9ab0b8"/></linearGradient></defs>
   <rect x="28" y="7" width="10.5" height="7.5" fill="url(#lgv)"/>
  </svg>
</div>

<div id="taskbar">
  <svg class="abs" style="left:0;top:0" width="48" height="40">
   <path d="M15.7 12.6 L22.3 11.7 V19.3 H15.7Z M23.3 11.5 L32.3 10.3 V19.3 H23.3Z M15.7 20.3 H22.3 V27.9 L15.7 27Z M23.3 20.3 H32.3 V29.3 L23.3 28.1Z" fill="#fff"/>
  </svg>
  <div class="abs" style="left:48px;top:0;width:288px;height:40px;background:#f0f0f0;border:1px solid #e2e2e2;border-bottom:none"></div>
  <svg class="abs" style="left:48px;top:0" width="288" height="40">
   <circle cx="22.8" cy="17.6" r="5" fill="none" stroke="#111" stroke-width="1.3"/>
   <path d="M19.3 21.1 L13.5 27.5" stroke="#111" stroke-width="1.4"/>
   <!-- flowers -->
   <path d="M205 40 Q235 31 288 32 V40Z" fill="#62a854"/>
   <path d="M240 40 Q262 34 288 36 V40Z" fill="#4e9a48"/>
   <path d="M225 17 L226 22 Q233 26 233.5 31 Q233 36 226 36 Q219 36 218.6 31 Q219 25 225 22Z" fill="#8654c0"/>
   <path d="M222 33 Q221 28 225 24" fill="none" stroke="#b490e0" stroke-width="1.3"/>
   <path d="M242.5 40 V31" stroke="#38a038" stroke-width="2"/>
   <path d="M235 21 Q234 15 237 13 Q240 16 241 18 Q242 12 245 12 Q248 15 247 18 Q249 14 251 15 Q252 22 249 27 Q246 32 242.5 32 Q238 31 236 26Z" fill="#f6bc18"/>
   <path d="M239 19 Q242 14 246 19 Q245 23 242.5 23 Q240 23 239 19Z" fill="#f08020"/>
   <path d="M262.5 40 V30" stroke="#38a038" stroke-width="2.5"/>
   <path d="M251 14 Q250 6 255 4 Q258 8 259 10 Q261 3 265 3 Q269 6 268 10 Q271 6 275 8 Q277 16 274 22 Q270 30 262.5 31 Q255 29 252 22Z" fill="#f8c420"/>
   <path d="M256 12 Q261 5 268 12 Q266 17 262 17 Q258 17 256 12Z" fill="#f06818"/>
   <circle cx="275.5" cy="32" r="5.3" fill="#f6b030"/><circle cx="275.5" cy="32" r="1.8" fill="#a04808"/>
  </svg>
  <div class="abs" style="left:88px;top:12.5px;font-size:14.3px;color:#222">Type here to search</div>
  <svg class="abs" style="left:348px;top:8px" width="24" height="24">
   <path d="M4.2 4 V6.5 H14.5 V4 M4.2 20 V17.5 H14.5 V20" fill="none" stroke="#fff" stroke-width="1.1"/>
   <rect x="4.2" y="8.5" width="10.3" height="7" fill="none" stroke="#fff" stroke-width="1.1"/>
   <path d="M18.5 4 V7.5 M18.5 12 V19.5" stroke="#fff" stroke-width="1.1"/>
   <rect x="17.5" y="8.5" width="2.2" height="2.6" fill="#fff"/>
  </svg>
  <svg class="abs" style="left:398px;top:7px" width="26" height="26"><use href="#edge" x="1" y="1" width="24.5" height="24.5"/></svg>
  <div class="abs" style="left:436px;top:0;width:48px;height:40px;background:#35454e"></div>
  <div class="abs" style="left:436px;top:37.5px;width:48px;height:2.5px;background:#9ccaf2"></div>
  <svg class="abs" style="left:446px;top:8px" width="28" height="24">
   <path d="M2 3 H9 L11 5 H25 V21 H2Z" fill="#f0b428"/>
   <rect x="2" y="6" width="23" height="15" fill="#fcd04c"/>
   <rect x="8" y="12" width="12" height="9" fill="#3a80d8"/>
   <rect x="11.5" y="14.5" width="5" height="3" fill="#f0c040"/>
  </svg>
  <svg class="abs" style="left:496px;top:6px" width="26" height="28">
   <use href="#firefox" x="0" y="1" width="26" height="26"/>
  </svg>
  <svg class="abs" style="left:544px;top:7px" width="28" height="26">
   <use href="#winrar" x="-1" y="0" width="27" height="26"/>
  </svg>
  <div class="abs" style="left:538px;top:37.5px;width:40px;height:2.5px;background:#9ccaf2"></div>
  <!-- tray -->
  <svg class="abs" style="left:1066px;top:8px" width="100" height="24">
   <path d="M7.5 15 L13 9.5 L18.5 15" fill="none" stroke="#fff" stroke-width="1.2"/>
   <path d="M33 6 A8.5 8.5 0 0 1 41 6 M33 19 A8.5 8.5 0 0 0 41 19" fill="none" stroke="#ddd" stroke-width="1.1"/>
   <rect x="32.5" y="9" width="6.5" height="7" rx="1.2" fill="none" stroke="#fff" stroke-width="1.1"/>
   <path d="M39.5 11 L43 9.5 V15.5 L39.5 14" fill="none" stroke="#fff" stroke-width="1.1"/>
   <rect x="58.5" y="8.5" width="10" height="9" fill="none" stroke="#fff" stroke-width="1.1"/>
   <rect x="53.5" y="6" width="4" height="4" fill="none" stroke="#fff" stroke-width="1"/>
   <path d="M55.5 10 V20 M60 21 H67 M63.5 17.5 V21 M57 12.5 H58.5" stroke="#fff" stroke-width="1.1"/>
   <path d="M77.5 11 H80.5 L85 7 V20 L80.5 16 H77.5Z" fill="none" stroke="#fff" stroke-width="1.1"/>
   <path d="M87.5 10.5 Q89.5 13.5 87.5 16.5 M89.8 8.5 Q93 13.5 89.8 18.5 M92 6.5 Q96.5 13.5 92 20.5" fill="none" stroke="#fff" stroke-width="1.1"/>
  </svg>
  <div class="abs" style="left:1165px;top:4px;font-size:11.6px;color:#fff;width:60px;text-align:center">5:26 PM</div>
  <div class="abs" style="left:1165px;top:21px;font-size:11.6px;color:#fff;width:60px;text-align:center">8/1/2025</div>
  <svg class="abs" style="left:1236px;top:8px" width="24" height="24">
   <path d="M3.5 4.5 H19.5 V17.5 H14 L11.5 20 L9 17.5 H3.5Z" fill="none" stroke="#fff" stroke-width="1.1"/>
  </svg>
  <div class="abs" style="left:1275px;top:0;width:1px;height:40px;background:#58606a"></div>
</div>
<!-- watermark -->
<svg class="abs" style="left:1030px;top:605px" width="210" height="70">
 <g fill="none" stroke="#88acea" stroke-width="3.2" stroke-linejoin="miter" opacity=".9">
  <path d="M11 54 L19.2 18.5 L27.4 54 M14.2 42 H24.2"/>
  <path d="M33.6 54 V18.5 L48.4 54 V18.5"/>
  <path d="M54.5 18.5 L62.8 36 L71 18.5 M62.8 36 V54"/>
  <path d="M87 12.5 L82.5 15 V57 L119.5 39"/>
  <path d="M92 6.5 V49"/>
  <path d="M92 6.5 L133 29 L128 32.5"/>
  <path d="M96.5 18.5 L132 40.5 L91.5 63 L90.5 58.5"/>
  <path d="M142.5 54 V18.5 H150 Q158 18.5 158 27.5 Q158 36.5 150 36.5 H142.5 M150 36.5 L158.5 54"/>
  <path d="M164.5 18.5 V47 Q164.5 54 171.3 54 Q178 54 178 47 V18.5"/>
  <path d="M185 54 V18.5 L198.5 54 V18.5"/>
 </g>
</svg>

</body></html>
